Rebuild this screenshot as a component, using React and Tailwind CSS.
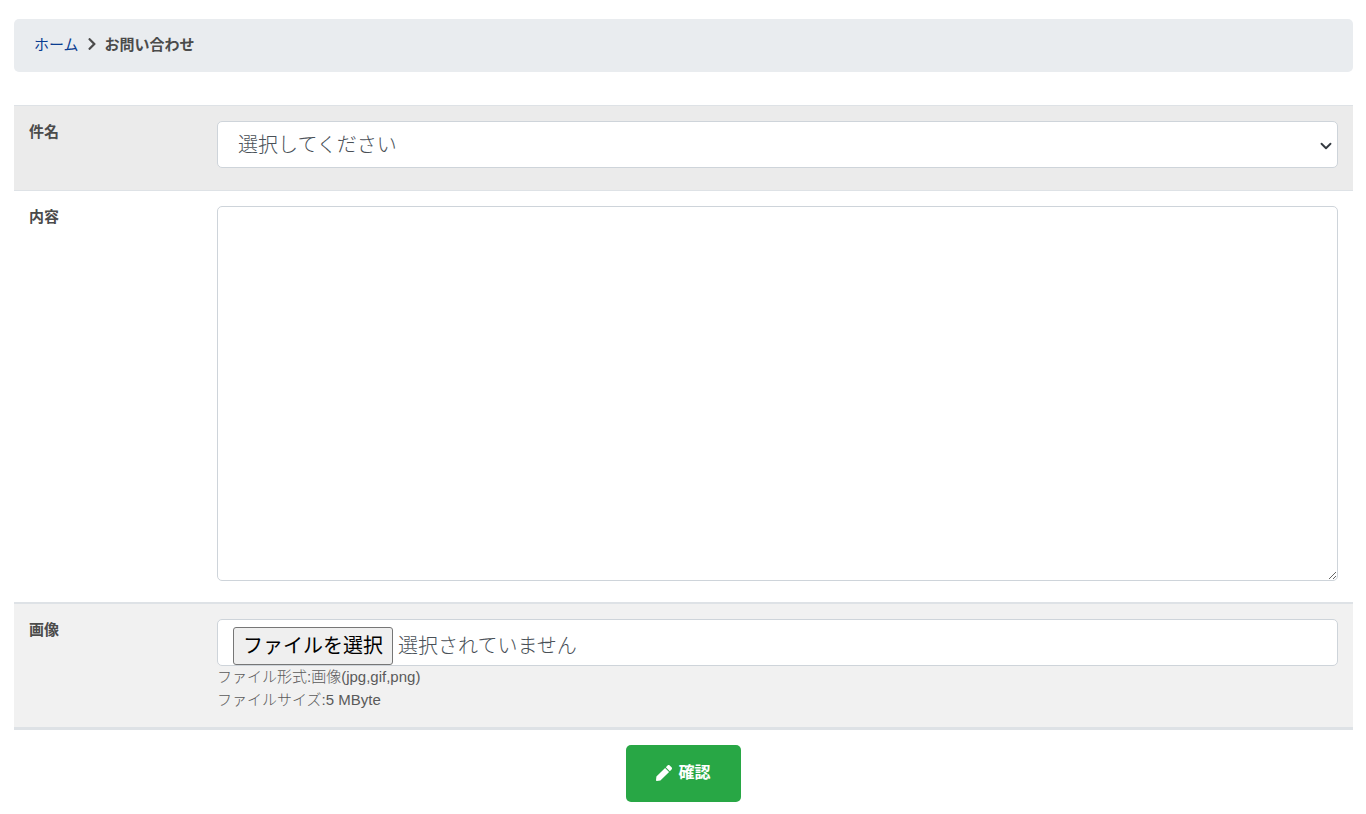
import React from 'react';
import { FaChevronRight, FaPen } from 'react-icons/fa';

const font = "font-['Liberation_Sans','Noto_Sans_CJK_JP',sans-serif]";

const Row = ({ label, className, children }) => (
    <div className={`flex px-[15px] pt-[15px] ${className}`}>
        <div className="w-[188px] shrink-0 text-[15px] leading-[21px] font-bold text-[#4b4b4b]">{label}</div>
        <div className="min-w-0 flex-1">{children}</div>
    </div>
);

const App = () => {
    return (
        <div className={`min-h-screen bg-white pl-[14px] pr-[13px] pt-[19px] ${font}`}>
            <nav className="flex h-[53px] items-center rounded-[5px] bg-[#e9ecef] pl-5 text-[15px] text-[#4b4b4b]">
                <a href="#" className="text-[#0b3d91]">ホーム</a>
                <FaChevronRight className="mx-1.5 h-[14px] w-[14px] -translate-y-[2px] text-[#4b4b4b]" />
                <span className="font-bold">お問い合わせ</span>
            </nav>

            <form className="mt-[33px]">
                <Row label="件名" className="h-[86px] border-y border-[#dee2e6] bg-[#ebebeb]">
                    <div className="relative">
                        <select className="h-[47px] w-full appearance-none rounded-[5px] border border-[#ced4da] bg-white pl-5 text-xl font-light text-[#495057] outline-none">
                            <option>選択してください</option>
                        </select>
                        <svg className="pointer-events-none absolute right-1.5 top-[19px] h-3 w-3" viewBox="0 0 16 16" fill="none" stroke="#343a40" strokeWidth="2.5" strokeLinecap="round" strokeLinejoin="round">
                            <path d="m2 5 6 6 6-6" />
                        </svg>
                    </div>
                </Row>

                <Row label="内容" className="h-[411px] bg-white">
                    <textarea className="block h-[375px] w-full rounded-[5px] border border-[#ced4da] bg-white outline-none" />
                </Row>

                <Row label="画像" className="h-[128px] border-t-2 border-b-[3px] border-[#dee2e6] bg-[#f1f1f1]">
                    <div className="flex h-[47px] items-start rounded-[5px] border border-[#ced4da] bg-white pl-[15px] pt-[7px] text-xl font-light text-[#495057]">
                        <button type="button" className="h-[38px] w-[160px] shrink-0 whitespace-nowrap rounded-[3px] border border-[#767676] bg-[#efefef] font-normal text-black">ファイルを選択</button>
                        <span className="ml-[5px] leading-[38px]">選択されていません</span>
                    </div>
                    <p className="-mt-px text-[15px] leading-[23px] font-light text-[#5a5a5a]">ファイル形式:画像(jpg,gif,png)</p>
                    <p className="text-[15px] leading-[23px] font-light text-[#5a5a5a]">ファイルサイズ:5 MByte</p>
                </Row>

                <div className="flex justify-center pt-[15px]">
                    <button type="button" className="flex h-[57px] w-[115px] items-center justify-center gap-1.5 rounded-[5px] bg-[#28a745] pb-0.5 text-base font-bold text-white">
                        <FaPen className="h-4 w-4" />
                        確認
                    </button>
                </div>
            </form>
        </div>
    );
};

export default App;
